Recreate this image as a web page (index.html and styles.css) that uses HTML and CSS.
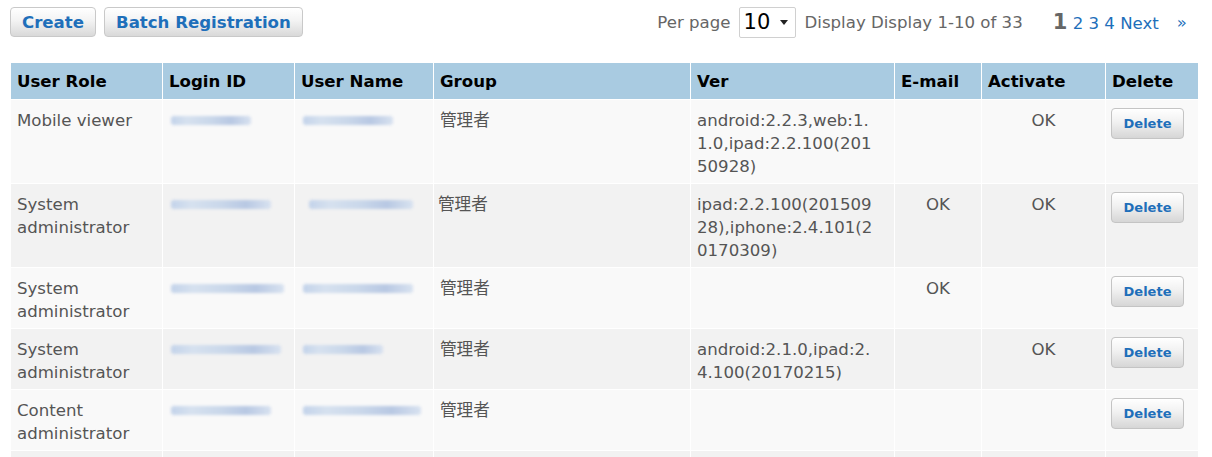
FILE: index.html
```html
<!DOCTYPE html>
<html>
<head>
<meta charset="utf-8">
<link rel="stylesheet" href="styles.css">
</head>
<body>
<div class="page">
  <div class="toolbar">
    <div class="actions">
      <button class="btn">Create</button>
      <button class="btn">Batch Registration</button>
    </div>
    <div class="paging">
      <span class="lbl">Per page</span>
      <span class="select"><span class="sel-val">10</span><span class="caret"></span></span>
      <span class="lbl">Display Display 1-10 of 33</span>
      <span class="pages"><span class="cur">1</span> <a>2</a> <a>3</a> <a>4</a> <a>Next</a></span>
      <a class="last">»</a>
    </div>
  </div>
  <table class="grid">
    <colgroup>
      <col class="c1"><col class="c2"><col class="c3"><col class="c4"><col class="c5"><col class="c6"><col class="c7"><col class="c8">
    </colgroup>
    <thead>
      <tr><th>User Role</th><th>Login ID</th><th>User Name</th><th>Group</th><th>Ver</th><th>E-mail</th><th>Activate</th><th>Delete</th></tr>
    </thead>
    <tbody>
      <tr>
        <td>Mobile viewer</td>
        <td><span class="blur w80"></span></td>
        <td><span class="blur w90"></span></td>
        <td>管理者</td>
        <td class="ver">android:2.2.3,web:1.1.0,ipad:2.2.100(20150928)</td>
        <td class="ctr"></td>
        <td class="ctr">OK</td>
        <td><button class="del">Delete</button></td>
      </tr>
      <tr>
        <td>System administrator</td>
        <td><span class="blur w100"></span></td>
        <td><span class="blur w105 ml"></span></td>
        <td class="grp2">管理者</td>
        <td class="ver">ipad:2.2.100(20150928),iphone:2.4.101(20170309)</td>
        <td class="ctr">OK</td>
        <td class="ctr">OK</td>
        <td><button class="del">Delete</button></td>
      </tr>
      <tr>
        <td>System administrator</td>
        <td><span class="blur w115"></span></td>
        <td><span class="blur w110"></span></td>
        <td>管理者</td>
        <td class="ver"></td>
        <td class="ctr">OK</td>
        <td class="ctr"></td>
        <td><button class="del">Delete</button></td>
      </tr>
      <tr>
        <td>System administrator</td>
        <td><span class="blur w110"></span></td>
        <td><span class="blur w80"></span></td>
        <td>管理者</td>
        <td class="ver">android:2.1.0,ipad:2.4.100(20170215)</td>
        <td class="ctr"></td>
        <td class="ctr">OK</td>
        <td><button class="del">Delete</button></td>
      </tr>
      <tr>
        <td>Content administrator</td>
        <td><span class="blur w100"></span></td>
        <td><span class="blur w118"></span></td>
        <td>管理者</td>
        <td class="ver"></td>
        <td class="ctr"></td>
        <td class="ctr"></td>
        <td><button class="del">Delete</button></td>
      </tr>
      <tr>
        <td>&nbsp;</td><td></td><td></td><td></td><td></td><td></td><td></td><td></td>
      </tr>
    </tbody>
  </table>
</div>
</body>
</html>
```
FILE: styles.css
```css
html, body {
  margin: 0;
  padding: 0;
  background: #fff;
}
body {
  font-family: "DejaVu Sans", Verdana, "Noto Sans CJK JP", sans-serif;
  font-size: 16.6px;
  color: #555;
  overflow: hidden;
}
.page {
  padding: 6px 25px 0 10px;
}
.toolbar {
  display: flex;
  justify-content: space-between;
  align-items: center;
  height: 32px;
  margin-bottom: 25px;
}
.actions {
  display: flex;
  gap: 8px;
}
.btn {
  font-family: inherit;
  font-weight: bold;
  font-size: 16.6px;
  color: #1e6fba;
  height: 30px;
  padding: 0 11px;
  border: 1px solid #c9c9c9;
  border-radius: 4px;
  background: linear-gradient(#ffffff 0%, #f3f3f3 45%, #d9d9d9 100%);
  box-shadow: inset 0 1px 0 #fff;
}
.paging {
  display: flex;
  align-items: center;
  color: #666;
}
.lbl {
  margin-right: 8px;
}
.select {
  display: inline-flex;
  align-items: center;
  justify-content: space-between;
  box-sizing: border-box;
  width: 57px;
  height: 31px;
  border: 1px solid #d0d0d0;
  border-radius: 2px;
  padding: 0 7px 0 4px;
  margin-right: 9px;
  background: #fff;
}
.sel-val {
  font-size: 21px;
  color: #000;
}
.caret {
  width: 0;
  height: 0;
  border-left: 4px solid transparent;
  border-right: 4px solid transparent;
  border-top: 5px solid #222;
}
.pages {
  margin-left: 22px;
  color: #1e6fba;
}
.pages a {
  color: #1e6fba;
}
.cur {
  font-weight: bold;
  font-size: 21px;
  color: #666;
}
.last {
  color: #1e6fba;
  margin-left: 18px;
}
.grid {
  border-collapse: collapse;
  table-layout: fixed;
  width: 1188px;
}
.c1 { width: 152px; }
.c2 { width: 132px; }
.c3 { width: 139px; }
.c4 { width: 257px; }
.c5 { width: 204px; }
.c6 { width: 87px; }
.c7 { width: 124px; }
.c8 { width: 93px; }
.grid th {
  background: #a9cbe1;
  color: #000;
  font-weight: bold;
  text-align: left;
  height: 35px;
  padding: 1px 6px 0 6px;
  border: 1px solid #fff;
  border-top: 0;
}
.grid td {
  vertical-align: top;
  padding: 9px 6px 5px 6px;
  line-height: 23px;
  border: 1px solid #fff;
}
.grid td.ver {
  word-break: break-all;
  padding-right: 16px;
}
.grid tbody tr:nth-child(odd) td { background: #f9f9f9; }
.grid tbody tr:nth-child(even) td { background: #f2f2f2; }
.grid td.ctr { text-align: center; }
.grid td.grp2 { padding-left: 4px; }
.blur {
  display: inline-block;
  height: 9px;
  margin-top: 7px;
  margin-left: 2px;
  border-radius: 3px;
  background: linear-gradient(90deg, #c3d3ea 0%, #d6e1ef 20%, #c9d7ea 50%, #b8c8e3 75%, #d8e2f0 100%);
  filter: blur(1.5px);
  vertical-align: top;
}
.ml { margin-left: 8px; }
.w80 { width: 80px; }
.w90 { width: 90px; }
.w100 { width: 100px; }
.w105 { width: 104px; }
.w110 { width: 110px; }
.w115 { width: 113px; }
.w118 { width: 118px; }
.del {
  font-family: inherit;
  font-weight: bold;
  font-size: 13px;
  color: #1e6fba;
  width: 73px;
  height: 31px;
  margin-top: -1px;
  margin-left: -1px;
  border: 1px solid #c4c4c4;
  border-radius: 4px;
  background: linear-gradient(#ffffff 0%, #f1f1f1 45%, #d6d6d6 100%);
  box-shadow: inset 0 1px 0 #fff;
}
```
